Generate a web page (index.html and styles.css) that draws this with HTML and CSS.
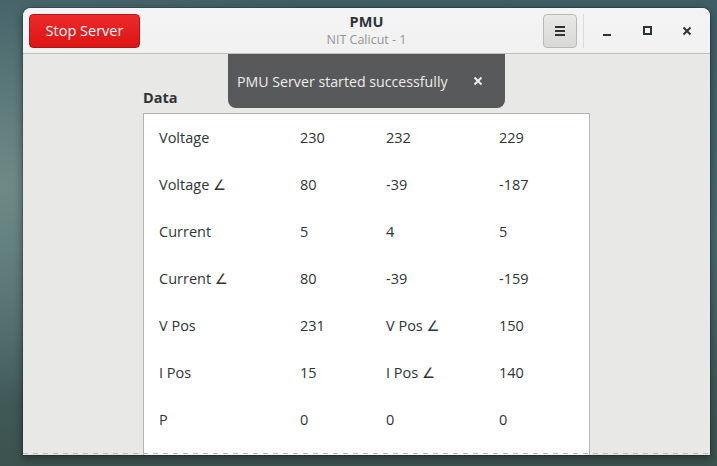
FILE: index.html
```html
<!DOCTYPE html>
<html>
<head>
<meta charset="utf-8">
<link rel="stylesheet" href="styles.css">
</head>
<body>
<div class="window">
  <header class="headerbar">
    <div class="hb-start">
      <button class="btn-destructive">Stop Server</button>
    </div>
    <div class="hb-title">
      <div class="title">PMU</div>
      <div class="subtitle">NIT Calicut - 1</div>
    </div>
    <div class="hb-end">
      <button class="btn-menu" aria-label="Menu">
        <svg width="16" height="16" viewBox="0 0 16 16"><rect x="3" y="3" width="10" height="2" fill="#2e3436"/><rect x="3" y="7" width="10" height="2" fill="#2e3436"/><rect x="3" y="11" width="10" height="2" fill="#2e3436"/></svg>
      </button>
      <span class="sep"></span>
      <button class="titlebtn" aria-label="Minimize">
        <svg width="16" height="16" viewBox="0 0 16 16"><rect x="4" y="11" width="8" height="2" fill="#2e3436"/></svg>
      </button>
      <button class="titlebtn" aria-label="Maximize">
        <svg width="16" height="16" viewBox="0 0 16 16"><rect x="5" y="4" width="7" height="7" fill="none" stroke="#2e3436" stroke-width="2"/></svg>
      </button>
      <button class="titlebtn" aria-label="Close">
        <svg width="16" height="16" viewBox="0 0 16 16"><path d="M4.5 4.5 L11.5 11.5 M11.5 4.5 L4.5 11.5" stroke="#2e3436" stroke-width="2" fill="none"/></svg>
      </button>
    </div>
  </header>
  <main class="content">
    <div class="toast">
      <span class="toast-text">PMU Server started successfully</span>
      <button class="toast-close" aria-label="Close">
        <svg width="10" height="10" viewBox="0 0 10 10"><path d="M1.5 1.5 L8.5 8.5 M8.5 1.5 L1.5 8.5" stroke="#eeeeec" stroke-width="2" fill="none"/></svg>
      </button>
    </div>
    <div class="section-label">Data</div>
    <div class="data-frame">
      <div class="grid">
        <span>Voltage</span><span>230</span><span>232</span><span>229</span>
        <span>Voltage ∠</span><span>80</span><span>-39</span><span>-187</span>
        <span>Current</span><span>5</span><span>4</span><span>5</span>
        <span>Current ∠</span><span>80</span><span>-39</span><span>-159</span>
        <span>V Pos</span><span>231</span><span>V Pos ∠</span><span>150</span>
        <span>I Pos</span><span>15</span><span>I Pos ∠</span><span>140</span>
        <span>P</span><span>0</span><span>0</span><span>0</span>
      </div>
    </div>
    <div class="undershoot"></div>
  </main>
</div>
</body>
</html>
```
FILE: styles.css
```css
html, body {
  margin: 0;
  height: 100%;
}
body {
  background:
    radial-gradient(ellipse at 0% 40%, #6d8a86 0%, rgba(109,138,134,0) 55%),
    linear-gradient(180deg, #3f5d65 0%, #4a6a6c 50%, #3c524f 100%);
  font-family: "Open Sans", "DejaVu Sans", sans-serif;
  color: #2e3436;
  overflow: hidden;
}
.window {
  position: relative;
  margin: 8px 0 0 23px;
  width: 687px;
  height: 447px;
  border-radius: 8px 8px 0 0;
  overflow: hidden;
  background: #e8e8e7;
  box-shadow: 0 3px 9px 1px rgba(0,0,0,0.35), 0 0 0 1px rgba(0,0,0,0.18);
  display: flex;
  flex-direction: column;
}
.headerbar {
  height: 45px;
  flex: none;
  display: grid;
  grid-template-columns: 1fr auto 1fr;
  align-items: center;
  padding: 0 6px;
  background: linear-gradient(#f4f4f4, #f1f1f1);
  border-bottom: 1px solid #bfbfbc;
}
.hb-start { display: flex; }
.btn-destructive {
  width: 111px;
  height: 34px;
  border: 1px solid #b2161d;
  border-radius: 4px;
  background: linear-gradient(#ee2a2a, #dc1414);
  color: #ffffff;
  font-family: inherit;
  font-size: 14.5px;
  padding: 0;
}
.hb-title {
  text-align: center;
  line-height: 1;
}
.title {
  font-weight: 700;
  font-size: 14.5px;
  color: #2e3436;
}
.subtitle {
  font-size: 12.5px;
  color: #929595;
  margin-top: 5px;
}
.hb-end {
  display: flex;
  justify-content: flex-end;
  align-items: center;
  padding-right: 1px;
}
.btn-menu {
  width: 34px;
  height: 34px;
  border: 1px solid #b8b8b4;
  border-radius: 4px;
  background: linear-gradient(#e8e8e6, #d8d8d5);
  display: flex;
  align-items: center;
  justify-content: center;
  padding: 0;
}
.btn-menu svg { display: block; }
.sep {
  width: 1px;
  height: 34px;
  background: #dcdcda;
  margin: 0 7px 0 6px;
}
.titlebtn {
  width: 32px;
  height: 34px;
  border: none;
  background: transparent;
  padding: 0;
  margin-left: 8px;
  display: flex;
  align-items: center;
  justify-content: center;
}
.sep + .titlebtn { margin-left: 0; }
.content {
  position: relative;
  flex: 1;
  padding: 34px 0 0 120px;
  overflow: hidden;
}
.toast {
  position: absolute;
  top: 0;
  left: 205px;
  width: 277px;
  height: 54px;
  box-sizing: border-box;
  background: #58595a;
  border-radius: 0 0 8px 8px;
  display: flex;
  align-items: center;
  padding: 0 0 0 9px;
  color: #eeeeec;
  font-size: 14.2px;
  z-index: 2;
}
.toast-text { flex: 1; }
.toast-close {
  width: 22px;
  height: 22px;
  border: none;
  background: transparent;
  padding: 0;
  margin-right: 16px;
  display: flex;
  align-items: center;
  justify-content: center;
}
.section-label {
  font-weight: 700;
  font-size: 14.5px;
  line-height: 20px;
  height: 25px;
}
.data-frame {
  width: 447px;
  height: 400px;
  box-sizing: border-box;
  background: #ffffff;
  border: 1px solid #b4b4b1;
}
.grid {
  display: grid;
  grid-template-columns: 141px 86px 113px 1fr;
  grid-auto-rows: 47px;
  align-items: center;
  padding-left: 15px;
  font-size: 14.5px;
}
.undershoot {
  position: absolute;
  left: 0;
  right: 0;
  bottom: 1px;
  height: 1px;
  background-image: linear-gradient(90deg, #b8b8b6 50%, transparent 50%);
  background-size: 10px 1px;
}
```
